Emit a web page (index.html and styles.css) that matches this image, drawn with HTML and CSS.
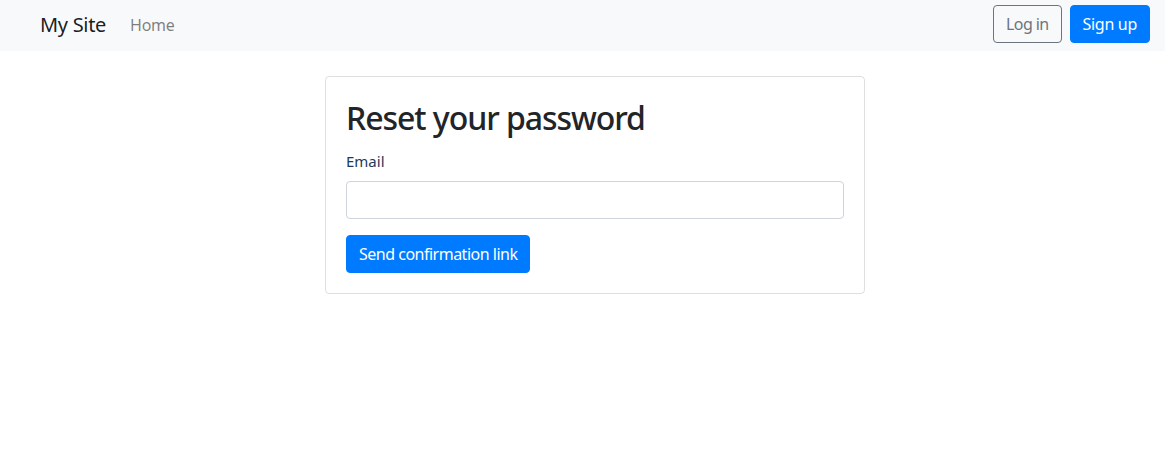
FILE: index.html
```html
<!DOCTYPE html>
<html lang="en">
<head>
<meta charset="utf-8">
<title>Reset your password</title>
<link rel="stylesheet" href="styles.css">
</head>
<body>
<nav class="navbar">
  <div class="nav-left">
    <a class="brand" href="#">My Site</a>
    <a class="nav-link" href="#">Home</a>
  </div>
  <div class="nav-right">
    <a class="btn btn-outline" href="#">Log in</a>
    <a class="btn btn-primary" href="#">Sign up</a>
  </div>
</nav>
<main class="main">
  <div class="card">
    <h2 class="title">Reset your password</h2>
    <form class="form">
      <div class="form-group">
        <label class="label" for="email">Email</label>
        <input class="input" id="email" type="email">
      </div>
      <button class="btn btn-primary btn-submit" type="button">Send confirmation link</button>
    </form>
  </div>
</main>
</body>
</html>
```

FILE: styles.css
```css
* { box-sizing: border-box; }
html, body { margin: 0; padding: 0; }
body {
  font-family: "Noto Sans", "Open Sans", "Liberation Sans", sans-serif;
  font-size: 16px;
  line-height: 1.5;
  color: #212529;
  background: #fff;
}
a { text-decoration: none; }
.navbar {
  display: flex;
  align-items: center;
  justify-content: space-between;
  height: 51px;
  padding: 5px 15px 8px 40px;
  background: #f8f9fa;
}
.nav-left { display: flex; align-items: center; padding-top: 2px; }
.brand {
  font-size: 20px;
  color: rgba(0,0,0,.9);
  margin-right: 24px;
  letter-spacing: -0.3px;
}
.nav-link {
  color: rgba(0,0,0,.5);
  font-size: 16px;
  letter-spacing: -0.3px;
}
.nav-right { display: flex; gap: 8px; }
.btn {
  display: inline-flex;
  align-items: center;
  justify-content: center;
  height: 38px;
  padding: 0 12px;
  font-family: inherit;
  font-size: 16px;
  border: 1px solid transparent;
  border-radius: 4px;
  cursor: pointer;
  letter-spacing: -0.3px;
}
.btn-outline { color: #6c757d; border-color: #6c757d; background: transparent; letter-spacing: -0.6px; }
.btn-primary { color: #fff; background: #007bff; border-color: #007bff; }
.btn-submit { letter-spacing: -0.5px; }
.main {
  display: flex;
  justify-content: center;
  padding: 25px 0 0 25px;
}
.card {
  width: 540px;
  border: 1px solid rgba(0,0,0,.125);
  border-radius: 4px;
  padding: 20px;
}
.title {
  margin: 2px 0 12px;
  font-size: 32px;
  font-weight: 500;
  line-height: 38px;
  letter-spacing: -1.05px;
}
.form { margin: 0; }
.form-group { margin-bottom: 16px; }
.label {
  display: block;
  margin-bottom: 8px;
  font-size: 15px;
  line-height: 24px;
  color: #1d3a5c;
}
.input {
  display: block;
  width: 100%;
  height: 38px;
  border: 1px solid #ced4da;
  border-radius: 4px;
  padding: 6px 12px;
  font-size: 16px;
}
```
